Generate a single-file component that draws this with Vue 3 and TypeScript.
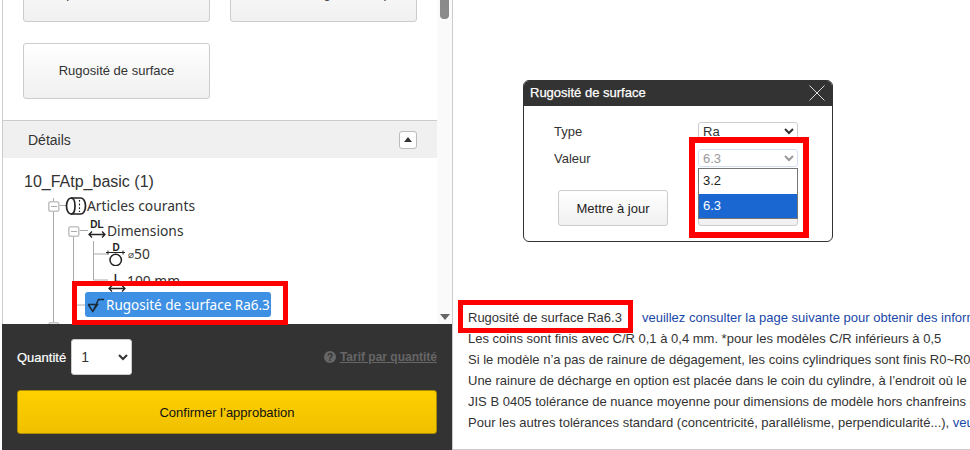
<script setup lang="ts">
const lines: string[] = [
  'Les coins sont finis avec C/R 0,1 à 0,4 mm. *pour les modèles C/R inférieurs à 0,5',
  'Si le modèle n’a pas de rainure de dégagement, les coins cylindriques sont finis R0~R0,4 mm',
  'Une rainure de décharge en option est placée dans le coin du cylindre, à l’endroit où le diamètre change',
  'JIS B 0405 tolérance de nuance moyenne pour dimensions de modèle hors chanfreins et arrondis',
]
</script>

<template>
  <div class="page">
    <aside class="left">
      <div class="scroller">
        <div class="content">
          <div class="btn-grid">
            <button class="opt">Spécification du trou</button>
            <button class="opt">Chanfrein angle de coupe</button>
            <button class="opt">Rugosité de surface</button>
          </div>
          <div class="details-head">
            <span>Détails</span>
            <span class="collapse"><i></i></span>
          </div>
          <div class="tree">
            <svg class="wires" width="200" height="170" viewBox="0 0 200 170">
              <g fill="none">
                <path stroke="#aaa" d="M50.500 40V170M70.500 77V147M90.500 83V122H105M90.500 96H105M70.500 147H83M57 47.500H63M77 72.500H85" />
                <g fill="#fff" stroke="#c4c4c4" stroke-width="1.600">
                  <rect x="45.800" y="43.800" width="10" height="9.500" rx="2" />
                  <rect x="65.800" y="68.800" width="10" height="9.500" rx="2" />
                  <rect x="45.800" y="164.800" width="10" height="9.500" rx="2" />
                </g>
                <path d="M48 48.500h6M68 73.500h6" stroke="#aaa" />
              </g>
            </svg>
            <div class="root">10_FAtp_basic (1)</div>
            <div class="node n1">
              <svg width="22" height="18" viewBox="0 0 22 18" fill="none" stroke="#222" stroke-width="1.700">
                <path d="M6 1h10c2.500 0 4.500 3.500 4.500 8s-2 8-4.500 8H6c-2.500 0-4.500-3.500-4.500-8S3.500 1 6 1z" />
                <path d="M6 1c2.500 0 4 3.500 4 8s-1.500 8-4 8" />
                <path d="M14.500 3v12" stroke-dasharray="1.800 1.800" stroke-width="1.100" />
              </svg>
              <span>Articles courants</span>
            </div>
            <div class="node n2">
              <svg width="18" height="22" viewBox="0 0 18 22" fill="none" stroke="#222">
                <text x="9" y="8" text-anchor="middle" class="tiny" stroke="none" fill="#222">DL</text>
                <path d="M1 14.500h16M4 11.500l-3 3 3 3M14 11.500l3 3-3 3" stroke-width="1.300" />
              </svg>
              <span>Dimensions</span>
            </div>
            <div class="node n3">
              <svg width="20" height="25" viewBox="0 0 20 25" fill="none" stroke="#222">
                <text x="10" y="10" text-anchor="middle" class="tiny" stroke="none" fill="#222">D</text>
                <path d="M0 11.500h19M2 9.500v4M17 9.500v4" />
                <circle cx="9.700" cy="19" r="5.700" stroke-width="1.500" />
              </svg>
              <span class="dia">⌀</span><span>50</span>
            </div>
            <div class="node n4">
              <svg width="18" height="26" viewBox="0 0 18 26" fill="none" stroke="#222">
                <text x="9" y="15" text-anchor="middle" class="tiny" stroke="none" fill="#222">L</text>
                <path d="M1 21.500h16M4 18.500l-3 3 3 3M14 18.500l3 3-3 3" stroke-width="1.300" />
              </svg>
              <span>100 mm</span>
            </div>
            <div class="node n5">
              <div class="selected">
                <svg width="18" height="16" viewBox="0 0 18 16" fill="none" stroke="#1c2a3a" stroke-width="1.500">
                  <path d="M1 7.500h9.500L5.800 14.500 1.200 7.500M5.800 14.500 11.500 2.500h5.500" />
                </svg>
                <span>Rugosité de surface Ra6.3</span>
              </div>
            </div>
          </div>
        </div>
        <div class="scrollbar">
          <span class="thumb"></span>
          <span class="down"></span>
        </div>
      </div>
      <div class="footer">
        <div class="qty-row">
          <label class="qty-label">Quantité</label>
          <select class="qty"><option>1</option></select>
          <a class="tarif">
            <svg width="12" height="12" viewBox="0 0 12 12">
              <circle cx="6" cy="6" r="6" fill="#666" />
              <text x="6" y="9.500" text-anchor="middle" class="q">?</text>
            </svg>
            <span>Tarif par quantité</span>
          </a>
        </div>
        <button class="confirm">Confirmer l’approbation</button>
      </div>
    </aside>

    <main class="right">
      <section class="modal">
        <header class="modal-head">
          <span>Rugosité de surface</span>
          <svg width="16" height="16" viewBox="0 0 16 16" stroke="#ddd" fill="none">
            <path d="M.5.5l15 15M15.500.5l-15 15" />
          </svg>
        </header>
        <div class="modal-body">
          <div class="field">
            <label>Type</label>
            <select class="sel"><option>Ra</option></select>
          </div>
          <div class="field second">
            <label>Valeur</label>
            <select class="sel" disabled><option>6.3</option></select>
          </div>
          <div class="actions">
            <button class="act">Mettre à jour</button>
            <button class="act back"></button>
          </div>
          <ul class="popup">
            <li>3.2</li>
            <li class="on">6.3</li>
          </ul>
        </div>
      </section>

      <div class="notes">
        <p class="first"><span>Rugosité de surface Ra6.3</span><a>veuillez consulter la page suivante pour obtenir des informations détaillées</a></p>
        <p v-for="l in lines" :key="l">{{ l }}</p>
        <p>Pour les autres tolérances standard (concentricité, parallélisme, perpendicularité...), <a>veuillez consulter</a></p>
      </div>
    </main>

    <span class="mark m1"></span>
    <span class="mark m2"></span>
    <span class="mark m3"></span>
  </div>
</template>

<style scoped>
.page {
  position: relative;
  display: flex;
  width: 970px;
  height: 450px;
  overflow: hidden;
  background: #fff;
  font-family: "Liberation Sans", Arial, sans-serif;
  color: #333;
}
.left {
  box-sizing: border-box;
  flex: none;
  width: 451px;
  height: 450px;
  margin-left: 2px;
  display: flex;
  flex-direction: column;
  border-right: 1px solid #ccc;
}
.scroller {
  display: flex;
  flex: none;
  height: 324px;
  border-left: 1px solid #ccc;
  overflow: hidden;
}
.content {
  flex: none;
  width: 434px;
}
.btn-grid {
  display: grid;
  grid-template-columns: 187px 187px;
  grid-auto-rows: 56px;
  column-gap: 20px;
  row-gap: 21px;
  margin-top: -34px;
  padding-left: 20px;
}
.opt {
  box-sizing: border-box;
  border: 1px solid #ccc;
  border-radius: 3px;
  background: linear-gradient(#fff, #f0f0f0);
  font: 13px "Liberation Sans", Arial, sans-serif;
  color: #333;
  padding: 0 0 2px;
}
.details-head {
  box-sizing: border-box;
  display: flex;
  justify-content: space-between;
  align-items: center;
  height: 38px;
  margin-top: 21px;
  padding: 0 20px 0 25px;
  background: #f0f0f0;
  border-top: 1px solid #ccc;
  font-size: 14px;
}
.collapse {
  box-sizing: border-box;
  display: flex;
  align-items: center;
  justify-content: center;
  width: 18px;
  height: 18px;
  border: 1px solid #bbb;
  border-radius: 3px;
  background: #fff;
}
.collapse i {
  width: 0;
  height: 0;
  border: 4px solid transparent;
  border-top: 0;
  border-bottom: 5px solid #333;
}
.tree {
  position: relative;
  height: 166px;
}
.wires {
  position: absolute;
  left: 0;
  top: 0;
  overflow: visible;
}
.root {
  position: relative;
  padding: 14px 0 0 21px;
  height: 21px;
  line-height: 19px;
  font-size: 16px;
}
.node {
  position: relative;
  display: flex;
  align-items: center;
  height: 25px;
  font: 13.800px "Noto Sans", sans-serif;
  color: #333;
}
.n1 { padding-left: 62px; }
.n2 { padding-left: 85px; gap: 1px; }
.n3 { padding-left: 103px; margin-top: -2px; }
.n4 { padding-left: 105px; margin-top: 1px; gap: 1px; height: 26px; }
.n5 { padding-left: 82px; margin-top: -1px; }
.dia { font-size: 10px; margin-left: 2px; }
.tiny {
  font: bold 10px "Liberation Sans", sans-serif;
}
.selected {
  display: flex;
  align-items: center;
  gap: 1px;
  box-sizing: border-box;
  width: 186px;
  height: 25px;
  padding-left: 2px;
  background: #3d90e3;
  border-radius: 3px;
  color: #fff;
  font-size: 13.500px;
  white-space: nowrap;
}
.selected svg { flex: none; }
.scrollbar {
  position: relative;
  flex: 1;
  background: #fafafa;
}
.thumb {
  position: absolute;
  left: 3px;
  top: 0;
  width: 9px;
  height: 19px;
  background: #8a8a8a;
  border-radius: 0 0 4px 4px;
}
.down {
  position: absolute;
  left: 3px;
  bottom: 4px;
  width: 0;
  height: 0;
  border: 5px solid transparent;
  border-bottom: 0;
  border-top: 6px solid #666;
}
.footer {
  flex: 1;
  box-sizing: border-box;
  padding: 15px 15px 0;
  background: #333;
}
.qty-row {
  display: flex;
  align-items: center;
  height: 36px;
}
.qty-label {
  color: #fff;
  font-size: 13px;
  -webkit-text-stroke: 0.2px #fff;
  margin-right: 5px;
}
.qty {
  box-sizing: border-box;
  width: 61px;
  height: 36px;
  padding-left: 5px;
  border: 1px solid #ccc;
  border-radius: 3px;
  background: #fff;
  color: #333;
  font: 14px "Liberation Sans", sans-serif;
}
.tarif {
  margin-left: auto;
  display: flex;
  align-items: center;
  gap: 4px;
  color: #666;
  font-size: 12px;
  font-weight: bold;
  text-decoration: underline;
}
.q {
  font: bold 10px "Liberation Sans", sans-serif;
  fill: #333;
}
.confirm {
  box-sizing: border-box;
  display: block;
  width: 420px;
  height: 44px;
  margin-top: 15px;
  border: 1px solid #a88c00;
  border-radius: 3px;
  background: linear-gradient(#ffd000, #f0c000);
  color: #111;
  font: 13px "Liberation Sans", sans-serif;
}
.right {
  flex: 1;
  min-width: 0;
  display: flex;
  flex-direction: column;
  border-bottom: 1px solid #ccc;
  height: 449px;
}
.modal {
  box-sizing: border-box;
  flex: none;
  width: 310px;
  height: 162px;
  margin: 80px 0 0 70px;
  border: 1px solid #333;
  border-radius: 6px;
  overflow: hidden;
}
.modal-head {
  box-sizing: border-box;
  display: flex;
  align-items: center;
  justify-content: space-between;
  height: 25px;
  padding: 0 7px 2px 6px;
  background: #333;
  color: #fff;
  font-size: 13px;
  -webkit-text-stroke: 0.25px #fff;
}
.modal-body {
  position: relative;
  padding: 16px 0 0 30px;
}
.field {
  display: flex;
  align-items: center;
  height: 18px;
  font-size: 13px;
}
.field label {
  width: 144px;
}
.second {
  margin-top: 9px;
}
.sel {
  box-sizing: border-box;
  width: 100px;
  height: 18px;
  padding: 0;
  border: 1px solid #ccc;
  border-radius: 3px;
  background: #fff;
  color: #333;
  font: 13px "Liberation Sans", sans-serif;
}
.sel:disabled {
  color: #999;
  border-color: #d5def5;
  opacity: 1;
}
.actions {
  display: flex;
  gap: 30px;
  margin: 23px 0 0 4px;
}
.act {
  box-sizing: border-box;
  width: 110px;
  height: 36px;
  padding: 0;
  border: 1px solid #ccc;
  border-radius: 3px;
  background: linear-gradient(#fff, #f0f0f0);
  font: 13px "Liberation Sans", sans-serif;
  color: #222;
}
.back {
  width: 100px;
}
.popup {
  position: absolute;
  left: 174px;
  top: 62px;
  box-sizing: border-box;
  width: 100px;
  margin: 0;
  padding: 0;
  list-style: none;
  background: #fff;
  border: 1px solid #767676;
  font-size: 13px;
}
.popup li {
  height: 24.500px;
  line-height: 24.500px;
  padding-left: 4px;
  color: #222;
}
.popup .on {
  background: #1a67d2;
  color: #fff;
}
.notes {
  margin: 66px 0 0 15px;
  font-size: 13px;
  line-height: 20.900px;
  white-space: nowrap;
  overflow: hidden;
}
.notes p {
  margin: 0;
}
.notes a {
  color: #1a47a8;
}
.first a {
  margin-left: 20px;
}
.mark {
  position: absolute;
  box-sizing: border-box;
  border: 5px solid #f00;
  pointer-events: none;
}
.m1 { left: 72px; top: 281px; width: 216px; height: 44px; }
.m2 { left: 689px; top: 137px; width: 120px; height: 101px; border-width: 6px; }
.m3 { left: 458px; top: 300px; width: 175px; height: 33px; }
</style>
